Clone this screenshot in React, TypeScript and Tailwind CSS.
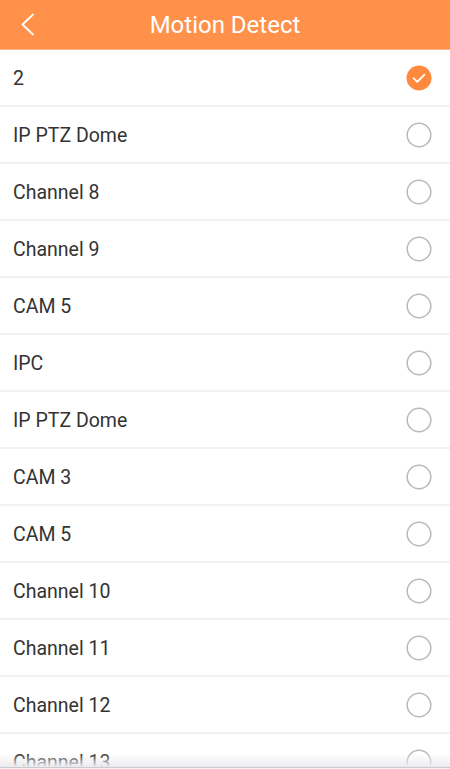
import React, { useState } from 'react';

const channels = [
  '2',
  'IP PTZ Dome',
  'Channel 8',
  'Channel 9',
  'CAM 5',
  'IPC',
  'IP PTZ Dome',
  'CAM 3',
  'CAM 5',
  'Channel 10',
  'Channel 11',
  'Channel 12',
  'Channel 13',
  'Channel 14',
];

const Radio = ({ checked }: { checked: boolean }) =>
  checked ? (
    <svg width="26" height="26" viewBox="0 0 26 26">
      <circle cx="13" cy="13" r="12.5" fill="#ff8a3d" />
      <path
        d="M7.5 13.2 L11.3 16.8 L18.5 9.6"
        fill="none"
        stroke="#fff"
        strokeWidth="1.8"
        strokeLinecap="round"
        strokeLinejoin="round"
      />
    </svg>
  ) : (
    <svg width="26" height="26" viewBox="0 0 26 26">
      <circle cx="13" cy="13" r="11.8" fill="none" stroke="#b9b9b9" strokeWidth="1.5" />
    </svg>
  );

const App = () => {
  const [selected, setSelected] = useState(0);

  return (
    <div className="relative h-[769px] overflow-hidden bg-white font-['Roboto',sans-serif]">
      <div className="relative flex h-[50px] items-center justify-center border-b border-[#ffb58a] bg-[#ff914a]">
        <button className="absolute left-[18px] top-[12px] flex h-[24px] w-[18px] items-center justify-center">
          <svg width="15" height="23" viewBox="0 0 15 23">
            <path
              d="M13 1.5 L2.5 11.5 L13 21.5"
              fill="none"
              stroke="#fff"
              strokeWidth="1.8"
              strokeLinecap="round"
              strokeLinejoin="round"
            />
          </svg>
        </button>
        <h1 className="text-[24px] font-normal text-white">Motion Detect</h1>
      </div>
      <ul>
        {channels.map((name, i) => (
          <li
            key={i}
            onClick={() => setSelected(i)}
            className="flex h-[57px] cursor-pointer items-center justify-between border-b-2 border-[#f2f2f2] pl-[13px] pr-[18px]"
          >
            <span className="pt-[3px] text-[19.5px] text-[#333]">{name}</span>
            <Radio checked={selected === i} />
          </li>
        ))}
      </ul>
      <div className="pointer-events-none absolute bottom-0 left-0 right-0">
        <div className="h-[13px] bg-gradient-to-b from-white/0 to-[#ececef]" />
        <div className="h-[1px] bg-[#c9c9d2]" />
        <div className="h-[1px] bg-[#f4f4f6]" />
      </div>
    </div>
  );
};

export default App;
